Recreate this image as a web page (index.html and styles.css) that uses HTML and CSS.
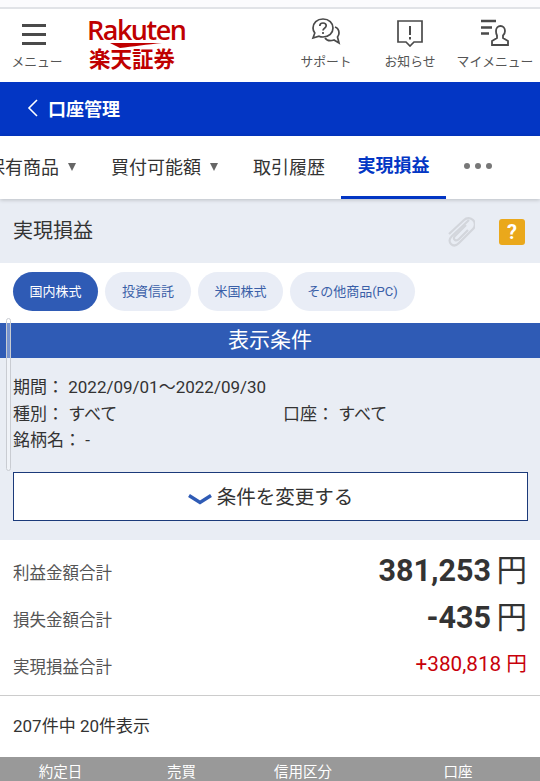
FILE: index.html
```html
<!DOCTYPE html>
<html lang="ja">
<head>
  <meta charset="UTF-8" />
  <meta name="viewport" content="width=device-width, initial-scale=1.0"/>
  <title>実現損益</title>
  <link rel="stylesheet" href="styles.css">
</head>
<body>
  <div class="top-strip"></div>

  <header class="site-header">
    <a class="head-item head-menu">
      <svg class="menu-icon" width="24" height="21" viewBox="0 0 24 21"><path d="M0 1.500h24M0 10.500h24M0 19.500h24" stroke="#4a4a4a" stroke-width="3" fill="none"/></svg>
      <span>メニュー</span>
    </a>
    <div class="logo">
      <div class="logo-en">Rakuten</div>
      <svg class="logo-swoosh" width="52" height="5" viewBox="0 0 52 5"><path d="M0 0h52C38 1.500 22 3.500 10 5z" fill="#bf0000"/></svg>
      <div class="logo-ja">楽天証券</div>
    </div>
    <a class="head-item head-support">
      <svg width="30" height="30" viewBox="0 0 30 30" fill="none" stroke="#4a4a4a" stroke-width="1.700">
        <path d="M12 2c6 0 10 4 10 9s-4 9-10 9c-1.500 0-3-.3-4-.8L2 21l1.800-5C2.600 14.500 2 13 2 11c0-5 4-9 10-9z"/>
        <path d="M24 10c2.500 1 4 3 4 6 0 2-.6 3-1.500 4l1.500 6-5-3c-3 1-7 1-9-2"/>
        <path d="M8.800 9c0-2 1.400-3 3.200-3s3.200 1 3.200 2.800c0 2.400-3.200 2.400-3.200 4.600"/>
        <path d="M12 15v2"/>
      </svg>
      <span>サポート</span>
    </a>
    <a class="head-item head-notice">
      <svg width="26" height="28" viewBox="0 0 26 28" fill="none" stroke="#4a4a4a" stroke-width="1.700">
        <path d="M1 2h24v21h-8l-4 4-4-4H1z"/>
        <path d="M13 7v9M13 18v2.500" stroke-width="2"/>
      </svg>
      <span>お知らせ</span>
    </a>
    <a class="head-item head-my">
      <svg width="28" height="28" viewBox="0 0 28 28" fill="none" stroke="#4a4a4a">
        <path d="M0 2h15M0 8.500h11M0 14.500h8" stroke-width="2.600"/>
        <path d="M15 12c0-3 2-5 4.500-5s4.500 2 4.500 5c0 2-.8 3.500-2 4.500v2.500l5 3v4H11v-4l5-3v-2.500c-.6-1-1-2.500-1-4.500z" stroke-width="1.800"/>
      </svg>
      <span>マイメニュー</span>
    </a>
  </header>

  <div class="page-bar">
    <svg width="11" height="18" viewBox="0 0 11 18"><path d="M10 1L2 9l8 8" stroke="#fff" stroke-width="1.600" fill="none"/></svg>
    <span>口座管理</span>
  </div>

  <nav class="tabs">
    <a class="tab tab-first">保有商品<i class="tri"></i></a>
    <a class="tab tab-second">買付可能額<i class="tri"></i></a>
    <a class="tab tab-third">取引履歴</a>
    <a class="tab tab-active">実現損益</a>
    <a class="tab-more"><i></i><i></i><i></i></a>
  </nav>

  <section class="title-row">
    <h1>実現損益</h1>
    <svg class="clip" width="30" height="32" viewBox="0 0 30 32" fill="none" stroke="#d3d6dc" stroke-width="2.200">
      <path d="M24 4L7 20c-3 3-3 6-1 8s5 2 8-1L28 13c3-3 2-7 0-9s-6-3-9 0L4 18"/>
      <path d="M21 9L10 20c-1.500 1.500-1.500 3 0 4s2.500 .5 4-1l9-9"/>
    </svg>
    <span class="help">?</span>
  </section>

  <div class="pills">
    <a class="pill pill-on">国内株式</a>
    <a class="pill">投資信託</a>
    <a class="pill pill-us">米国株式</a>
    <a class="pill pill-wide">その他商品(PC)</a>
  </div>

  <section class="cond">
    <div class="scroll-thumb"></div>
    <h2>表示条件</h2>
    <div class="cond-body">
      <div class="cond-line">期間： 2022/09/01～2022/09/30</div>
      <div class="cond-line cond-two">
        <span>種別： すべて</span>
        <span>口座： すべて</span>
      </div>
      <div class="cond-line">銘柄名： -</div>
      <button type="button" class="change-btn">
        <svg width="24" height="11" viewBox="0 0 24 11"><path d="M1 1.500l11 7 11-7" stroke="#2f5bb5" stroke-width="3.400" fill="none"/></svg>
        <span>条件を変更する</span>
      </button>
    </div>
  </section>

  <section class="totals">
    <div class="total-row">
      <span class="total-label">利益金額合計</span>
      <span class="total-big"><b>381,253</b> 円</span>
    </div>
    <div class="total-row">
      <span class="total-label">損失金額合計</span>
      <span class="total-big"><b>-435</b> 円</span>
    </div>
    <div class="total-row">
      <span class="total-label">実現損益合計</span>
      <span class="total-red">+380,818 円</span>
    </div>
  </section>

  <div class="count">207件中 20件表示</div>

  <div class="table-head">
    <span class="col-date">約定日</span>
    <span class="col-side">売買</span>
    <span class="col-margin">信用区分</span>
    <span class="col-acct">口座</span>
  </div>
</body>
</html>
```

FILE: styles.css
```css
* {
  box-sizing: border-box;
  margin: 0;
  padding: 0;
}

html, body {
  height: 781px;
  overflow: hidden;
}

body {
  background-color: #fff;
  color: #333;
  font-family: Roboto, 'Noto Sans CJK JP', sans-serif;
}

a {
  color: inherit;
  text-decoration: none;
}

.top-strip {
  height: 9px;
  background-color: #fbfbfd;
  border-bottom: 2px solid #e1e3e7;
}

/* header */
.site-header {
  position: relative;
  display: flex;
  height: 73px;
  background-color: #fff;
}

.head-item {
  display: flex;
  flex-direction: column;
  align-items: center;
  justify-content: flex-end;
  height: 52px;
  margin-top: 8px;
  font-size: 12.800px;
  line-height: 15px;
  color: #555;
  gap: 7px;
}

.head-menu {
  width: 74px;
  margin-right: 15px;
}

.menu-icon {
  margin: 0 6px 2px 0;
}

.head-support {
  width: 80px;
  margin-left: 97px;
}

.head-notice {
  width: 80px;
  margin-left: 4px;
}

.head-my {
  width: 84px;
  margin-left: 3px;
}

.logo {
  width: 100px;
  padding-top: 6px;
  color: #bf0000;
}

.logo-en {
  margin-left: -2px;
  font-family: 'Open Sans', sans-serif;
  font-size: 27px;
  line-height: 29px;
  font-weight: 600;
  letter-spacing: -1.500px;
}

.logo-swoosh {
  display: block;
  margin: -1px 0 0 21px;
}

.logo-ja {
  font-size: 21.500px;
  line-height: 24px;
  font-weight: 700;
  white-space: nowrap;
}

/* blue bar */
.page-bar {
  display: flex;
  align-items: center;
  gap: 10px;
  height: 54px;
  padding: 0 0 3px 27px;
  background-color: #0336c4;
  color: #fff;
  font-size: 18px;
  font-weight: 700;
}

/* tabs */
.tabs {
  position: relative;
  z-index: 1;
  display: flex;
  height: 63px;
  overflow: hidden;
  background-color: #fff;
  box-shadow: 0 1px 4px rgba(0,0,0,0.2);
  font-size: 18px;
  color: #333;
}

.tab {
  display: flex;
  align-items: center;
  flex: none;
  height: 61px;
  padding-bottom: 2px;
}

.tab-first {
  width: 124px;
  margin-left: -13px;
}

.tab-second {
  width: 142px;
}

.tab-third {
  width: 88px;
}

.tri {
  display: inline-block;
  margin: 2px 0 0 9px;
  border-left: 4.500px solid transparent;
  border-right: 4.500px solid transparent;
  border-top: 8px solid #666;
}

.tab-active {
  justify-content: center;
  width: 105px;
  height: 63px;
  padding-bottom: 4px;
  border-bottom: 3px solid #0336c4;
  color: #0336c4;
  font-weight: 700;
}

.tab-more {
  display: flex;
  align-items: center;
  gap: 5px;
  margin-left: 18px;
  height: 61px;
  padding-bottom: 2px;
}

.tab-more i {
  width: 6px;
  height: 6px;
  border-radius: 50%;
  background-color: #777;
}

/* title */
.title-row {
  display: flex;
  align-items: center;
  height: 64px;
  padding: 0 15px 0 13px;
  background-color: #e9edf4;
}

.title-row h1 {
  flex: 1;
  font-size: 20px;
  font-weight: 400;
  color: #333;
  margin-top: -3px;
}

.clip {
  margin-right: 24px;
  margin-top: 2px;
}

.help {
  width: 26px;
  height: 26px;
  margin-top: 2px;
  border-radius: 3px;
  background-color: #eaa81b;
  color: #fff;
  font-size: 20px;
  font-weight: 700;
  line-height: 26px;
  text-align: center;
}

/* pills */
.pills {
  display: flex;
  gap: 7px;
  height: 60px;
  padding: 9px 13px 0;
}

.pill {
  display: flex;
  align-items: center;
  justify-content: center;
  width: 86px;
  height: 39px;
  padding-bottom: 2px;
  border-radius: 20px;
  background-color: #e9edf6;
  color: #3a5fa8;
  font-size: 13px;
}

.pill-on {
  width: 85px;
  background-color: #2f5bb5;
  color: #fff;
}

.pill-us {
  width: 85px;
}

.pill-wide {
  width: 125px;
}

/* conditions */
.cond {
  position: relative;
  height: 217px;
  background-color: #e9edf4;
}

.scroll-thumb {
  position: absolute;
  left: 6px;
  top: -5px;
  width: 5px;
  height: 153px;
  border: 1px solid #c9ccd2;
  border-radius: 3px;
  background-color: rgba(255,255,255,0.35);
}

.cond h2 {
  height: 35px;
  background-color: #2f5bb5;
  color: #fff;
  font-size: 21px;
  font-weight: 400;
  line-height: 35px;
  text-align: center;
}

.cond-body {
  padding: 16px 13px 0;
  font-size: 17px;
}

.cond-line {
  height: 26.500px;
  line-height: 26.500px;
  color: #333;
}

.cond-two {
  display: grid;
  grid-template-columns: 270px 1fr;
}

.change-btn {
  display: flex;
  align-items: center;
  justify-content: center;
  gap: 5px;
  width: 515px;
  height: 49px;
  margin-top: 18.500px;
  border: 1px solid #1b3a7a;
  background-color: #fff;
  color: #333;
  font-family: inherit;
  font-size: 19.500px;
}

.change-btn svg {
  margin-top: 5px;
}

.change-btn span {
  margin-top: -2px;
}

/* totals */
.totals {
  height: 156px;
  padding: 4px 13px 0;
  border-bottom: 1px solid #ccc;
}

.total-row {
  display: flex;
  align-items: center;
  justify-content: space-between;
  height: 47px;
}

.total-label {
  font-size: 16.500px;
  color: #555;
  margin-top: 9px;
}

.total-big {
  font-size: 30.500px;
  word-spacing: -2px;
  color: #333;
}

.total-big b {
  font-weight: 700;
}

.total-red {
  font-size: 20.700px;
  color: #c8000a;
}

.count {
  height: 61px;
  padding: 18px 13px 0;
  font-size: 17px;
  line-height: 24px;
  color: #333;
}

/* table head */
.table-head {
  position: relative;
  display: flex;
  height: 24px;
  padding-top: 7px;
  background-color: #999;
  color: #fff;
  font-size: 14.500px;
  line-height: 17px;
  text-align: center;
}

.col-date {
  width: 121px;
}

.col-side {
  width: 121px;
}

.col-margin {
  width: 122px;
}

.col-acct {
  flex: 1;
  padding-left: 12px;
}
```
